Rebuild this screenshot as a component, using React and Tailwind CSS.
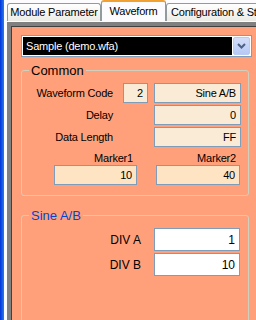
import React from "react";

/*
 Waveform tab page: sample combo, "Common" group and "Sine A/B" group
 on a salmon panel, XP-style tab strip above.
*/

function Tab({ children, className = "" }) {
  return (
    <div
      className={`h-[18px] shrink-0 flex items-center border border-b-0 border-[#919b9c] rounded-t-[3px] bg-gradient-to-b from-white to-[#ecebe6] ${className}`}
    >
      {children}
    </div>
  );
}

function Box({ value, className = "" }) {
  return (
    <div
      className={`h-[20px] shrink-0 border border-[#7f9db9] flex items-center justify-end pr-[4px] leading-none ${className}`}
    >
      {value}
    </div>
  );
}

export default function App() {
  return (
    <div className="w-[256px] h-[320px] overflow-hidden flex bg-[#fcfcfe] text-[11px] text-black tracking-[-0.2px] font-['Liberation_Sans',Arial,sans-serif]">
      <div className="w-[4px] shrink-0 bg-gradient-to-r from-[#0831d9] to-[#2b78f0]" />
      <div className="w-[3px] shrink-0 bg-[#fcfcfe]" />

      <div className="flex-1 min-w-0 flex flex-col">
        {/* tab strip */}
        <div className="h-[21px] shrink-0 flex items-end whitespace-nowrap">
          <Tab className="w-[94px] justify-center">Module Parameter</Tab>
          <div className="h-[21px] w-[65px] shrink-0 flex items-center justify-center border-x border-[#919b9c] border-t-2 border-t-[#f0a132] rounded-t-[3px] bg-[#fcfcfe]">
            Waveform
          </div>
          <Tab className="w-[120px] pl-[4px]">Configuration &amp; Status</Tab>
        </div>
        <div className="h-[1px] shrink-0 bg-[#fcfcfe]" />

        {/* page */}
        <div className="flex-1 border-t-4 border-l-4 border-[#808080]">
          <div className="h-full border-t border-l border-[#404040] bg-[#ffa07a] pl-[9px] pt-[8px] flex flex-col">
            {/* combo */}
            <div className="w-[231px] h-[22px] shrink-0 border border-[#7f9db9] bg-white p-[1px] flex gap-[1px]">
              <div className="flex-1 bg-black text-white flex items-center pl-[3px] leading-none">
                Sample (demo.wfa)
              </div>
              <div className="w-[17px] h-[18px] rounded-[2px] border border-[#b9cbf3] bg-gradient-to-b from-[#d4defa] to-[#b6c9f5] flex items-center justify-center">
                <svg width="9" height="6" viewBox="0 0 9 6">
                  <path d="M1 1 L4.5 4.5 L8 1" fill="none" stroke="#4d6185" strokeWidth="2" />
                </svg>
              </div>
            </div>

            {/* Common */}
            <fieldset className="mt-[6px] w-[228px] shrink-0 border border-[#d0d0bf] rounded-[3px] pb-[10px]">
              <legend className="ml-[7px] px-[2px] text-[13px] leading-[15px] tracking-normal">Common</legend>
              <div className="mt-[5px] flex items-center">
                <div className="w-[91px] text-right">Waveform Code</div>
                <Box value="2" className="ml-[10px] w-[25px] bg-[#faebd7] pr-[2px]" />
                <Box value="Sine A/B" className="ml-[6px] w-[87px] bg-[#faebd7]" />
              </div>
              <div className="mt-[2px] flex items-center">
                <div className="w-[91px] text-right">Delay</div>
                <Box value="0" className="ml-[41px] w-[87px] bg-[#faebd7]" />
              </div>
              <div className="mt-[2px] flex items-center">
                <div className="w-[91px] text-right">Data Length</div>
                <Box value="FF" className="ml-[41px] w-[87px] bg-[#faebd7]" />
              </div>
              <div className="mt-[5px] flex">
                <div className="ml-[32px] w-[83px] flex flex-col">
                  <div className="h-[13px] leading-[13px] text-right pr-[4px]">Marker1</div>
                  <Box value="10" className="w-full bg-[#ffe4c4]" />
                </div>
                <div className="ml-[19px] w-[84px] flex flex-col">
                  <div className="h-[13px] leading-[13px] text-right pr-[4px]">Marker2</div>
                  <Box value="40" className="w-full bg-[#ffe4c4]" />
                </div>
              </div>
            </fieldset>

            {/* Sine A/B */}
            <fieldset className="mt-[12px] w-[228px] h-[160px] shrink-0 border border-[#d0d0bf] rounded-[3px]">
              <legend className="ml-[7px] px-[2px] text-[13px] leading-[15px] tracking-normal text-[#0046d5]">Sine A/B</legend>
              <div className="mt-[5px] flex items-center text-[12px] tracking-normal">
                <div className="w-[119px] text-right">DIV A</div>
                <Box value="1" className="ml-[13px] w-[86px] h-[23px] bg-white" />
              </div>
              <div className="mt-[2px] flex items-center text-[12px] tracking-normal">
                <div className="w-[119px] text-right">DIV B</div>
                <Box value="10" className="ml-[13px] w-[86px] h-[23px] bg-white" />
              </div>
            </fieldset>
          </div>
        </div>
      </div>
    </div>
  );
}
